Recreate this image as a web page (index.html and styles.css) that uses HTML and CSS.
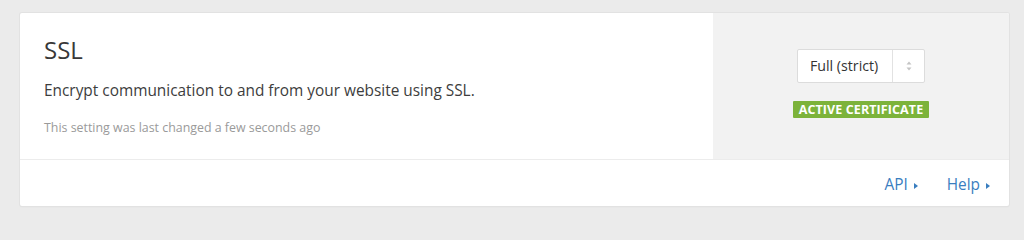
FILE: index.html
```html
<!DOCTYPE html>
<html>
<head>
<meta charset="utf-8">
<link rel="stylesheet" href="styles.css">
</head>
<body>
<div class="page">
  <div class="card">
    <div class="card-main">
      <div class="info">
        <h2 class="title">SSL</h2>
        <p class="desc">Encrypt communication to and from your website using SSL.</p>
        <p class="meta">This setting was last changed a few seconds ago</p>
      </div>
      <div class="control">
        <div class="select">
          <span class="select-value">Full (strict)</span>
          <span class="select-arrows">
            <svg width="8" height="12" viewBox="0 0 8 12"><path d="M4 1.5 L6.5 4.5 H1.5 Z" fill="#c4c4c4"/><path d="M4 10.5 L6.5 7.5 H1.5 Z" fill="#c4c4c4"/></svg>
          </span>
        </div>
        <span class="badge">ACTIVE CERTIFICATE</span>
      </div>
    </div>
    <div class="card-footer">
      <a class="link">API<span class="caret"></span></a>
      <a class="link">Help<span class="caret"></span></a>
    </div>
  </div>
</div>
</body>
</html>
```

FILE: styles.css
```css
html, body {
  margin: 0;
  padding: 0;
  background: #ebebeb;
  font-family: "Open Sans", "Liberation Sans", sans-serif;
  overflow: hidden;
}

.page {
  padding: 13px 15px 12px 20px;
}

.card {
  background: #fff;
  box-shadow: 0 0 0 1px #e2e2e2, 0 1px 2px rgba(0,0,0,0.05);
  border-radius: 2px;
  overflow: hidden;
}

.card-main {
  display: flex;
  height: 146px;
}

.info {
  flex: 1;
  padding: 22px 24px 0 24px;
}

.title {
  margin: 0;
  font-size: 24px;
  line-height: 30px;
  font-weight: 400;
  color: #383838;
}

.desc {
  margin: 16px 0 0;
  font-size: 15.4px;
  line-height: 20px;
  color: #3d3d3d;
}

.meta {
  margin: 19px 0 0;
  font-size: 12.4px;
  line-height: 16px;
  color: #9a9a9a;
}

.control {
  width: 296px;
  background: #f2f2f2;
  display: flex;
  flex-direction: column;
  align-items: center;
  padding-top: 36px;
  box-sizing: border-box;
}

.select {
  display: flex;
  width: 128px;
  height: 34px;
  box-sizing: border-box;
  background: #fff;
  border: 1px solid #dcdcdc;
  border-radius: 2px;
}

.select-value {
  flex: 1;
  padding-left: 12px;
  font-size: 14.2px;
  line-height: 32px;
  color: #333;
}

.select-arrows {
  width: 31px;
  border-left: 1px solid #e2e2e2;
  display: flex;
  align-items: center;
  justify-content: center;
}

.badge {
  margin-top: 18px;
  background: #7cb33a;
  color: #fff;
  font-size: 12.5px;
  font-weight: 700;
  line-height: 17px;
  padding: 0 6px;
  border-radius: 1px;
  letter-spacing: 0.1px;
}

.card-footer {
  height: 47px;
  box-sizing: border-box;
  border-top: 1px solid #ececec;
  display: flex;
  justify-content: flex-end;
  gap: 29px;
  padding: 4px 19px 0 0;
}

.link {
  font-size: 15.4px;
  line-height: 20px;
  color: #3a7ebf;
  display: inline-flex;
  align-items: center;
}

.caret {
  display: inline-block;
  width: 0;
  height: 0;
  margin-left: 6px;
  margin-top: 1px;
  border-left: 4px solid #3a7ebf;
  border-top: 3px solid transparent;
  border-bottom: 3px solid transparent;
}
```
